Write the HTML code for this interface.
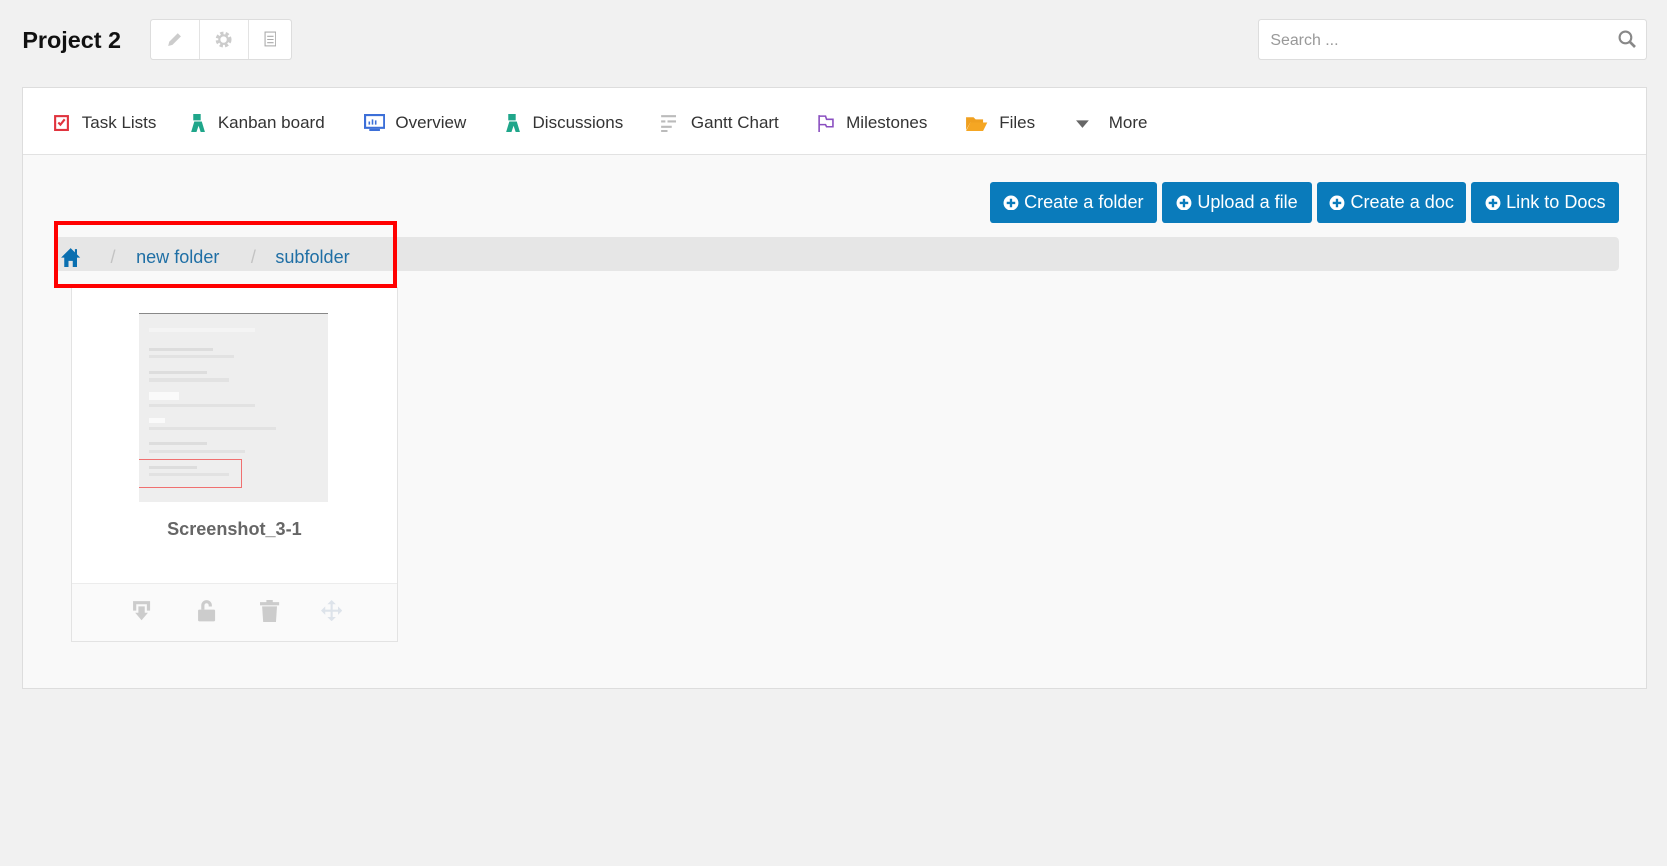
<!DOCTYPE html>
<html><head><meta charset="utf-8"><style>
html{zoom:1.0631}
*{box-sizing:border-box;margin:0;padding:0}
body{width:1568px;height:815px;background:#f1f1f1;font-family:"Liberation Sans",sans-serif;position:relative;overflow:hidden;color:#333}
.abs{position:absolute}
.title{left:21px;top:25px;font-size:22px;font-weight:bold;color:#111}
.bg{left:141px;top:18px;height:38px;display:flex;border:1px solid #ddd;border-radius:3px;background:#fff}
.bg div{width:46px;border-right:1px solid #e3e3e3;display:flex;align-items:center;justify-content:center}
.bg div:last-child{width:40px;border:none}
.search{left:1183px;top:18px;width:366px;height:38px;background:#fff;border:1px solid #ddd;border-radius:3px;font-size:15px;color:#999;padding:11px 0 0 11px}
.panel{left:21px;top:82px;width:1528px;height:566px;border:1px solid #ddd;background:#f9f9f9}
.nav{position:absolute;left:0;top:0;right:0;height:63px;background:#fff;border-bottom:1px solid #e2e2e2}
.ni{position:absolute;top:23px;font-size:16px;color:#333;display:flex;align-items:center}
.ni svg{margin-right:10px}
.btn{position:absolute;top:171px;height:39px;background:#0a7bbb;color:#fff;font-size:17px;border-radius:3px;display:flex;align-items:center;justify-content:center;gap:5px}
.bc{left:52px;top:223px;width:1471px;height:32px;background:#e6e6e6;border-radius:4px}
.bct{position:absolute;top:232px;font-size:17px;color:#1f6fa5}
.sl{position:absolute;top:232px;font-size:17px;color:#c3c3c3}
.red{left:51px;top:208px;width:322px;height:63px;border:4px solid #f00}
.card{left:67px;top:270px;width:307px;height:334px;background:#fff;border:1px solid #e3e3e3;border-top:none}
.foot{position:absolute;left:0;right:0;bottom:0;height:55px;background:#fafafa;border-top:1px solid #ececec}
.img{left:131px;top:294px;width:178px;height:178px;background:#eee;border-top:1px solid #888}
.img div{position:absolute;left:9px;height:3px;background:#ddd}
</style></head><body>
<div class="abs title">Project 2</div>
<div class="abs bg">
<div><svg width="18" height="18" viewBox="0 0 18 18"><path d="M3 15l1-4 8-8 3 3-8 8z" fill="#ccc"/></svg></div>
<div><svg width="18" height="18" viewBox="0 0 18 18"><circle cx="9" cy="9" r="6" fill="none" stroke="#ccc" stroke-width="3" stroke-dasharray="3 2"/><circle cx="9" cy="9" r="4" fill="none" stroke="#ccc" stroke-width="2"/></svg></div>
<div><svg width="12" height="15" viewBox="0 0 12 15"><rect x="1" y="1" width="10" height="13" fill="none" stroke="#aaa"/><path d="M3 5h6M3 8h6M3 11h6" stroke="#aaa"/></svg></div>
</div>
<div class="abs search">Search ...<svg class="abs" style="left:338px;top:9px" width="17" height="17" viewBox="0 0 17 17"><circle cx="7" cy="7" r="5.5" fill="none" stroke="#888" stroke-width="2"/><path d="M11 11l5 5" stroke="#888" stroke-width="2.5"/></svg></div>
<div class="abs panel">
<div class="nav">
<div class="ni" style="left:28px"><svg width="17" height="17"><rect x="1" y="1" width="14" height="15" fill="#e0343e"/><rect x="3" y="3" width="10" height="11" fill="#fff"/><path d="M5 8l2 2 4-5" stroke="#e0343e" stroke-width="2" fill="none"/></svg>Task Lists</div>
<div class="ni" style="left:156px"><svg width="17" height="17"><rect x="4" y="0" width="7" height="6" fill="#1fa68a"/><path d="M2 17l3-10h7l3 10h-4l-2-6-2 6z" fill="#1fa68a"/></svg>Kanban board</div>
<div class="ni" style="left:320px"><svg width="20" height="17"><rect x="1" y="1" width="18" height="12" fill="none" stroke="#3c6fd8" stroke-width="2"/><path d="M5 10v-3M8 10v-5M11 10v-4" stroke="#3c6fd8" stroke-width="1.5"/><rect x="5" y="14" width="10" height="2" fill="#3c6fd8"/></svg>Overview</div>
<div class="ni" style="left:452px"><svg width="17" height="17"><rect x="4" y="0" width="7" height="6" fill="#1fa68a"/><path d="M2 17l3-10h7l3 10h-4l-2-6-2 6z" fill="#1fa68a"/></svg>Discussions</div>
<div class="ni" style="left:598px"><svg width="20" height="17"><path d="M2 2h8M10 2h6M2 7h4M8 7h8M2 12h10M2 16h6" stroke="#bbb" stroke-width="2"/></svg>Gantt Chart</div>
<div class="ni" style="left:747px"><svg width="17" height="17"><path d="M2 1v16M2 2h6l1 3h6v7H9l-1-2H2" fill="none" stroke="#8a4fc0" stroke-width="1.5"/></svg>Milestones</div>
<div class="ni" style="left:886px"><svg width="22" height="17"><path d="M1 3h7l2 2h7v3H5L1 15z" fill="#f0a020"/><path d="M5 8h16l-4 8H1z" fill="#f5a623"/></svg>Files</div>
<div class="ni" style="left:989px"><svg width="22" height="17"><path d="M1 6h12l-6 7z" fill="#666"/></svg>More</div>
</div>
</div>
<div class="btn" style="left:931px;width:157px"><svg width="15" height="15"><circle cx="7.5" cy="7.5" r="7" fill="#fff"/><path d="M7.5 3.5v8M3.5 7.5h8" stroke="#0a7bbb" stroke-width="2.2"/></svg>Create a folder</div>
<div class="btn" style="left:1093px;width:141px"><svg width="15" height="15"><circle cx="7.5" cy="7.5" r="7" fill="#fff"/><path d="M7.5 3.5v8M3.5 7.5h8" stroke="#0a7bbb" stroke-width="2.2"/></svg>Upload a file</div>
<div class="btn" style="left:1239px;width:140px"><svg width="15" height="15"><circle cx="7.5" cy="7.5" r="7" fill="#fff"/><path d="M7.5 3.5v8M3.5 7.5h8" stroke="#0a7bbb" stroke-width="2.2"/></svg>Create a doc</div>
<div class="btn" style="left:1384px;width:139px"><svg width="15" height="15"><circle cx="7.5" cy="7.5" r="7" fill="#fff"/><path d="M7.5 3.5v8M3.5 7.5h8" stroke="#0a7bbb" stroke-width="2.2"/></svg>Link to Docs</div>
<div class="abs bc"></div>
<svg class="abs" style="left:56px;top:232px" width="20" height="19" viewBox="0 0 20 19"><path d="M10 1L1 10h3v9h4v-6h4v6h4v-9h3z" fill="#0a6fb0"/><rect x="14" y="2" width="2" height="5" fill="#0a6fb0"/></svg>
<div class="sl" style="left:104px">/</div>
<div class="bct" style="left:128px">new folder</div>
<div class="sl" style="left:236px">/</div>
<div class="bct" style="left:259px">subfolder</div>
<div class="abs card"><div class="foot"></div></div>
<div class="abs red"></div>
<div class="abs img">
<div style="top:14px;width:100px;background:#f4f4f4"></div>
<div style="top:32px;width:60px"></div><div style="top:39px;width:80px;background:#e2e2e2"></div>
<div style="top:54px;width:55px"></div><div style="top:61px;width:75px;background:#e2e2e2"></div>
<div style="top:74px;width:28px;height:7px;background:#fafafa"></div><div style="top:85px;width:100px;background:#e2e2e2"></div>
<div style="top:98px;width:15px;height:5px;background:#fafafa"></div><div style="top:107px;width:120px;background:#e2e2e2"></div>
<div style="top:121px;width:55px"></div><div style="top:128px;width:90px;background:#e2e2e2"></div>
<div style="top:143px;width:45px"></div><div style="top:150px;width:75px;background:#e2e2e2"></div>
<div style="top:137px;left:0;width:97px;height:27px;background:none;border:1px solid #f07070;border-left:none"></div>
</div>
<div class="abs" style="left:67px;top:488px;width:307px;text-align:center;font-size:17px;font-weight:bold;color:#666">Screenshot_3-1</div>
<svg class="abs" style="left:124px;top:564px" width="18" height="20"><path d="M1 1h16v9h-3V4H4v6H1z" fill="#ccc"/><path d="M6 6h6v6h3l-6 7-6-7h3z" fill="#ccc"/></svg>
<svg class="abs" style="left:185px;top:563px" width="18" height="22"><path d="M4 10V6a5 5 0 0 1 10 0v1h-3V6a2 2 0 0 0-4 0v4" fill="#ccc"/><rect x="1" y="10" width="16" height="11" rx="1" fill="#ccc"/></svg>
<svg class="abs" style="left:245px;top:564px" width="18" height="21"><rect x="0" y="2" width="18" height="3" fill="#ccc"/><rect x="6" y="0" width="6" height="3" fill="#ccc"/><path d="M2 6h14l-1 15H3z" fill="#ccc"/></svg>
<svg class="abs" style="left:302px;top:564px" width="20" height="20"><path d="M10 0l4 4h-3v5h5V6l4 4-4 4v-3h-5v5h3l-4 4-4-4h3v-5H4v3l-4-4 4-4v3h5V4H6z" fill="#dde3ea"/></svg>
</body></html>
